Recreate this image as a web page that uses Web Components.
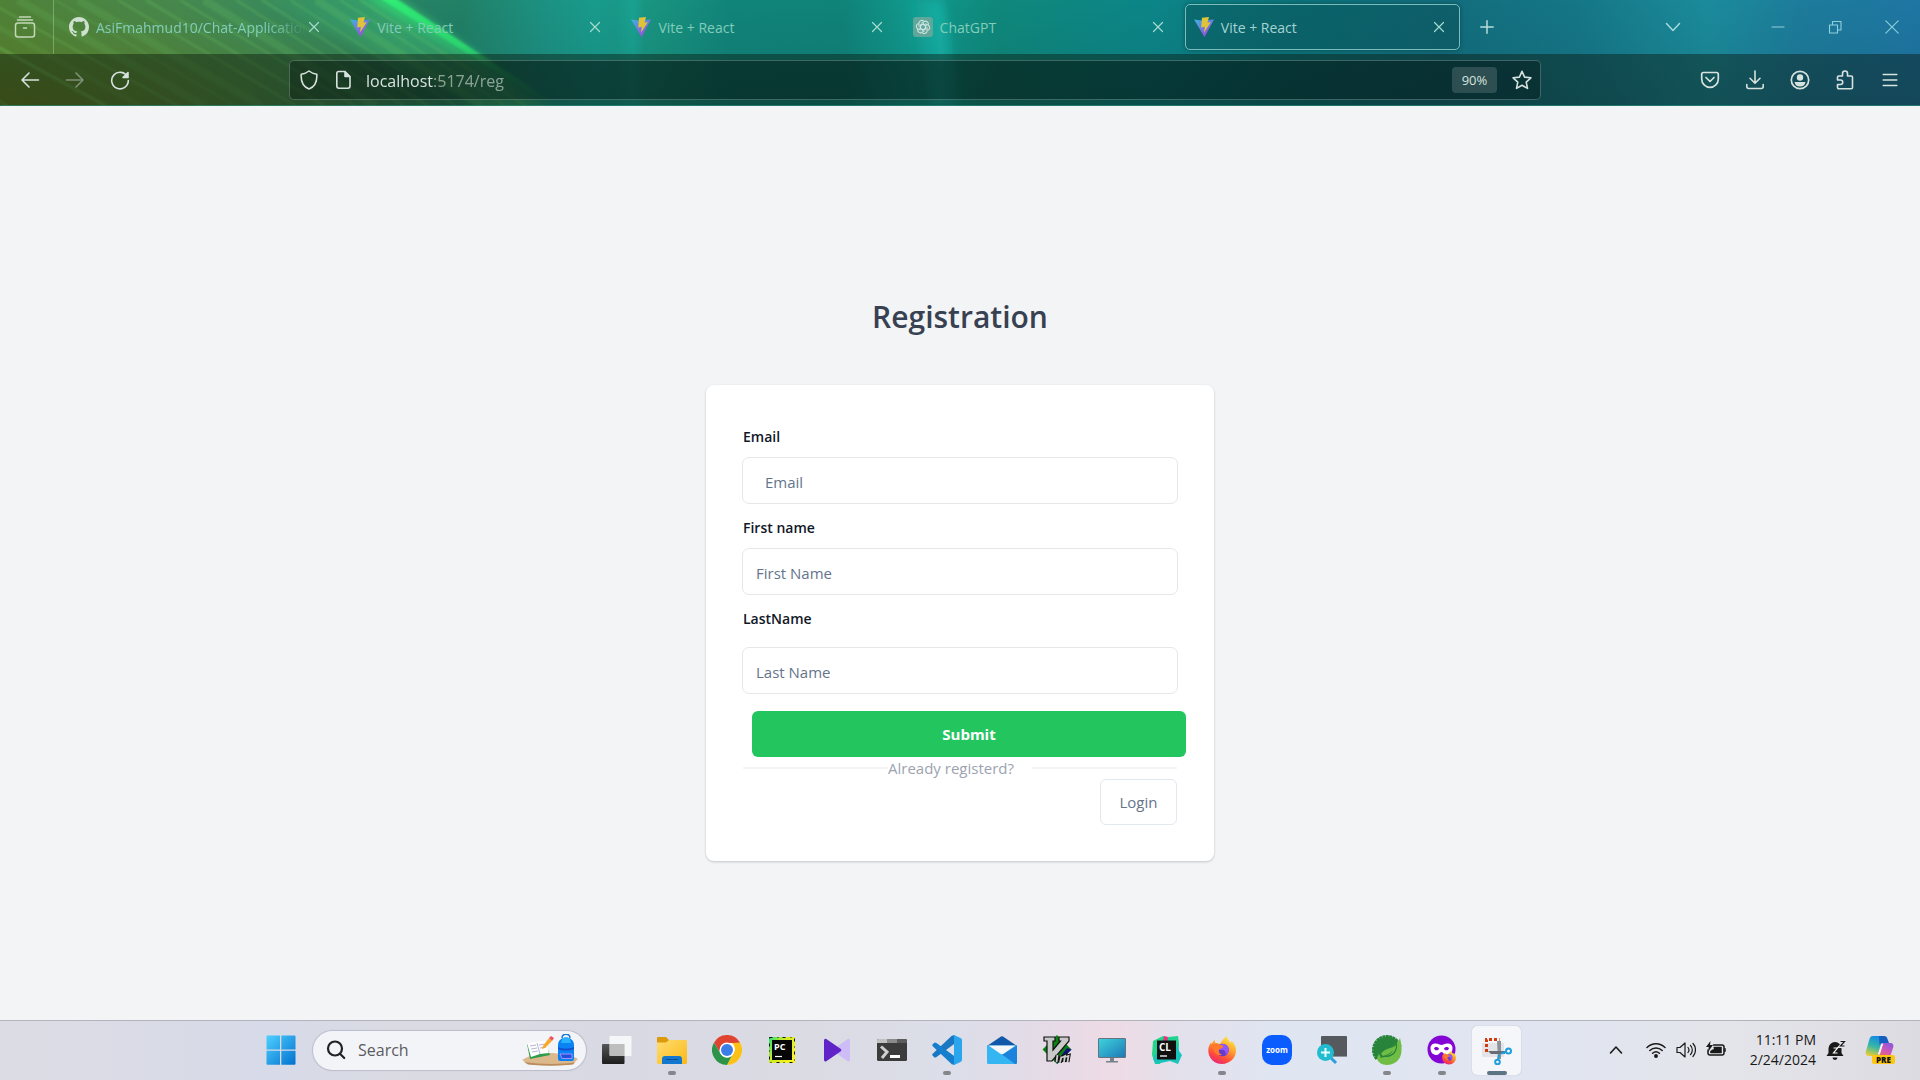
<!DOCTYPE html>
<html lang="en">
<head>
<meta charset="utf-8">
<title>Vite + React</title>
<style>
  html, body { margin: 0; height: 100%; }
  body {
    display: flex; flex-direction: column; min-height: 100vh; overflow: hidden;
    font-family: "Open Sans", "Noto Sans", sans-serif; font-size: 14px; background: #f3f4f6;
  }
</style>
</head>
<body>
<browser-chrome>
  <tab-strip slot="tabs">
    <browser-tab icon="github" faded>AsiFmahmud10/Chat-Application</browser-tab>
    <browser-tab icon="vite">Vite + React</browser-tab>
    <browser-tab icon="vite">Vite + React</browser-tab>
    <browser-tab icon="openai">ChatGPT</browser-tab>
    <browser-tab icon="vite" active>Vite + React</browser-tab>
  </tab-strip>
  <nav-toolbar slot="toolbar"></nav-toolbar>
</browser-chrome>
<registration-page></registration-page>
<task-bar>
  <task-app icon="taskview" label="Task view"></task-app>
  <task-app icon="folder" label="File Explorer" running></task-app>
  <task-app icon="chrome" label="Chrome"></task-app>
  <task-app icon="pycharm" label="PyCharm"></task-app>
  <task-app icon="player" label="Player"></task-app>
  <task-app icon="terminal" label="Terminal"></task-app>
  <task-app icon="vscode" label="Visual Studio Code" running></task-app>
  <task-app icon="mail" label="Mail"></task-app>
  <task-app icon="vim" label="Vim"></task-app>
  <task-app icon="monitor" label="This PC"></task-app>
  <task-app icon="clion" label="CLion"></task-app>
  <task-app icon="firefox" label="Firefox" running></task-app>
  <task-app icon="zoom" label="Zoom"></task-app>
  <task-app icon="magnify" label="Magnifier"></task-app>
  <task-app icon="spring" label="Spring Tools" running></task-app>
  <task-app icon="private" label="Private browsing" running></task-app>
  <task-app icon="snip" label="Snipping Tool" active></task-app>
</task-bar>

<script>
const line = (size, body, w = 1.6) =>
  `<svg viewBox="0 0 ${size} ${size}" width="${size}" height="${size}" fill="none" stroke="currentColor" stroke-width="${w}" stroke-linecap="round" stroke-linejoin="round">${body}</svg>`;
const pic = (size, body) => `<svg viewBox="0 0 ${size} ${size}" width="${size}" height="${size}">${body}</svg>`;

const knot = [0, 60, 120, 180, 240, 300].map(a =>
  `<path transform="rotate(${a} 10 10)" d="M10 7.2 12.6 8.7V12.6M8.3 6.400 11.2 4.600a2.800 2.800 0 0 1 4.100 3.200"/>`).join('');
const gear = Array.from({ length: 15 }, (_, i) =>
  `<rect x="13.400" y="0" width="3.200" height="5" rx=".6" transform="rotate(${i * 14 - 125} 15 15)"/>`).join('');
const fox = `
  <defs><linearGradient id="fa" x1=".8" y1="0" x2=".3" y2="1"><stop offset="0" stop-color="#fff04a"/><stop offset=".4" stop-color="#ffa42c"/><stop offset=".75" stop-color="#ff4b3a"/><stop offset="1" stop-color="#e8257a"/></linearGradient></defs>
  <path fill="url(#fa)" d="M15 29C7 29 1.300 23 1.300 15.500c0-3.500 1.200-6 2.700-8l.5 2c.8-2.200 2-3.700 3.200-4.500-.1 1.200.2 2.200.8 3 1.500 0 3 .3 4.200 1C15 6 16.500 3.500 19.500 1c.5 3 2.500 4.800 4.600 7 .2-1 .2-1.600 0-2.400 3.400 3 4.900 6.400 4.900 10C29 23 23 29 15 29z"/>
  <circle cx="15.500" cy="15" r="6.300" fill="#6a39c9"/><path fill="#9059ff" d="M12 10c3-2 8-1 9.500 3 .8 3-1 6-3 7 1-4-2-6-6-5z"/>
  <path fill="#ff7b2a" d="M4 10c3-2 6-2 8.500-.5l4 1.500c-.3 2-2.500 2.600-4.200 3.200-1.200 2.400.2 5 3.200 5.400-3 1.800-7.500.4-8.500-4z"/>`;

const ICONS = {
  recent: line(24, '<path d="M6.500 2h11M4.500 5h15"/><rect x="2.500" y="8" width="19" height="14" rx="2.500"/><path d="M10.500 13h3"/>', 1.500),
  github: `<svg viewBox="0 0 16 16" width="20" height="20" fill="#cfe0d0"><path d="M8 0C3.580 0 0 3.580 0 8c0 3.540 2.290 6.530 5.470 7.590.4.070.55-.17.55-.38 0-.19-.01-.82-.01-1.490-2.010.37-2.530-.49-2.690-.94-.09-.23-.48-.94-.82-1.130-.28-.15-.68-.52-.01-.53.63-.01 1.080.58 1.230.82.72 1.210 1.870.87 2.330.66.070-.52.280-.87.510-1.070-1.780-.2-3.640-.89-3.640-3.950 0-.87.310-1.590.82-2.150-.08-.2-.36-1.020.08-2.120 0 0 .67-.21 2.200.82.64-.18 1.320-.27 2-.27s1.360.09 2 .27c1.530-1.040 2.200-.82 2.200-.82.44 1.100.16 1.920.08 2.120.51.56.82 1.270.82 2.150 0 3.070-1.870 3.750-3.650 3.950.290.250.540.730.540 1.480 0 1.070-.01 1.930-.01 2.200 0 .21.150.46.550.38A8.010 8.010 0 0 0 16 8c0-4.420-3.580-8-8-8z"/></svg>`,
  vite: pic(20, `<defs><linearGradient id="va" x1="0" y1="0" x2=".7" y2="1"><stop offset="0" stop-color="#38b5e0"/><stop offset="1" stop-color="#a545dc"/></linearGradient></defs><path fill="url(#va)" d="M0 2.500 8 3.500 20 2.500 10.500 20z"/><path fill="#dfc43a" d="m8 .8 7-.8-1.500 5.500 3.300-.3L10 15.500l.8-5.700-3.600.6z"/>`),
  openai: pic(20, `<rect width="20" height="20" rx="3" fill="#5fa69b"/><g fill="none" stroke="#cfe5e0" stroke-width="1.100">${knot}</g>`),
  close: line(12, '<path d="m1.500 1.500 9 9m0-9-9 9"/>', 1.200),
  plus: line(14, '<path d="M7 .8v12.400M.8 7h12.400"/>', 1.500),
  chevdown: line(16, '<path d="m1.500 4.500 6.500 7 6.500-7"/>', 1.500),
  min: line(14, '<path d="M1 7h12"/>', 1.100),
  restore: line(14, '<path d="M1.500 5h8v8h-8zM4.500 5V1.500h8.500V10H9.500"/>', 1.100),
  winclose: line(14, '<path d="m.8.8 12.400 12.400m0-12.400L.8 13.200"/>', 1.100),
  back: line(20, '<path d="M18.500 10H2m7-7L2 10l7 7"/>', 1.600),
  forward: line(20, '<path d="M1.500 10H18m-7-7 7 7-7 7"/>', 1.600),
  reload: line(20, '<path d="M17.500 7A8.300 8.300 0 1 0 18.300 10.500"/><path fill="currentColor" d="M18 2.500v5h-5z"/>', 1.600),
  shield: line(20, '<path d="M10 1c2.200 1.800 5 2.800 7.800 3.200C18.300 12 15.500 17 10 19 4.500 17 1.700 12 2.200 4.200 5 3.800 7.800 2.800 10 1z"/>', 1.600),
  page: line(20, '<path d="M5 1.500h6l5 5V16a2.200 2.200 0 0 1-2.200 2.200H5A2.200 2.200 0 0 1 2.800 16V3.500a2 2 0 0 1 2-2z"/><path fill="currentColor" d="M11 2v4.500h4.500z"/>', 1.600),
  star: line(20, '<path d="m10 1.300 2.600 5.800 6.300.7-4.700 4.300 1.300 6.300-5.500-3.200-5.500 3.200 1.300-6.300L1.100 7.800l6.300-.7z"/>', 1.600),
  pocket: line(20, '<path d="M3.500 2.500h13a1.800 1.800 0 0 1 1.800 1.800V9a8.300 8.300 0 0 1-16.600 0V4.300a1.800 1.800 0 0 1 1.800-1.800zM6 7.500l4 4 4-4"/>', 1.700),
  download: line(20, '<path d="M10 1v12M5 8.300l5 5 5-5M1.800 14.500v2a2 2 0 0 0 2 2h12.400a2 2 0 0 0 2-2v-2"/>', 1.600),
  account: line(20, '<circle cx="10" cy="10" r="8.700"/><g fill="currentColor" stroke="none"><circle cx="10" cy="7.500" r="3.200"/><path d="M4.500 12h11c-.5 3-2.500 4.500-5.500 4.500S5 15 4.500 12z"/></g>', 1.700),
  puzzle: line(20, '<path d="M7.500 6V3.500a2.500 2.500 0 0 1 5 0V6h3.700a1.300 1.300 0 0 1 1.300 1.300V17.500a1.300 1.300 0 0 1-1.300 1.300H3.800a1.300 1.300 0 0 1-1.300-1.300V14.500h3a2 2 0 0 0 0-4.500h-3V7.300A1.300 1.300 0 0 1 3.800 6z"/>', 1.600),
  menu: line(16, '<path d="M1.200 2.500h13.600M1.200 8h13.600M1.200 13.500h13.600"/>', 1.500),

  start: pic(30, `<defs><linearGradient id="sa" x1="0" y1="0" x2="1" y2="1"><stop offset="0" stop-color="#4fd0ff"/><stop offset="1" stop-color="#0271cf"/></linearGradient></defs><path fill="url(#sa)" d="M1.500.5H14v14H.5v-13a1 1 0 0 1 1-1zM15.300.5h13.200a1 1 0 0 1 1 1v13H15.300zM.5 15.800H14v14H1.500a1 1 0 0 1-1-1zM15.300 15.800h14.200v13a1 1 0 0 1-1 1H15.300z"/>`),
  search: line(20, '<circle cx="9" cy="8.500" r="7"/><path d="m14.200 14 4 4"/>', 2.200),
  doodle: `<svg viewBox="0 0 58 32" width="58" height="32">
    <path fill="#dcb98c" d="M1 26c8-5 18-7 27-7s22 2 29 6l-5 5c-14 2-32 2-45 0z"/><path fill="#b98d5d" d="m3 28 4 2.500c14 1.500 32 1.500 45 0l2-2c-14 2-35 2-51-.5z"/>
    <path fill="#2e9c4b" d="m6 10 3 15 20-4-2-5z"/><path fill="#fff" d="m6 9 10-1 8-1 4 12-9 1-9 3z"/><path stroke="#b9b3d0" fill="none" d="m9 12 6-1m-5 4 6-1m-5 4 6-1m1-6 6-1m-5 4 6-1M16 9l3 11"/>
    <path fill="#f7a928" d="m22 12 6-8 3 3-7 7-3 1z"/><path fill="#ee5161" d="m28 4 2-2 3 2-2 3z"/>
    <path fill="none" stroke="#1877d4" stroke-width="1.500" d="M41 4c0-5 8-5 8 0"/><path fill="#0b82f4" d="M37 11c0-10 16-10 16 0v14a2 2 0 0 1-2 2H39a2 2 0 0 1-2-2z"/><path fill="#28b2ff" d="M41 5c2-2 6-2 8 0l1 4H40z"/><path fill="#1250d0" d="M37 13c5 2 11 2 16 0v2c-5 2-11 2-16 0z"/><path fill="#244fdd" stroke="#c79bff" stroke-width=".8" d="M39 20h12v4.500H41z"/></svg>`,
  taskview: pic(30, `<defs><linearGradient id="ta" x1="0" y1="0" x2="0" y2="1"><stop offset="0" stop-color="#555"/><stop offset="1" stop-color="#1d1d1d"/></linearGradient></defs><rect y="9" width="22.500" height="20" rx="1" fill="url(#ta)"/><rect x="7.500" y="1" width="22" height="20" rx="1" fill="#fafafa" opacity=".85"/><path fill="#b5b5b5" opacity=".8" d="M7.500 9h15v12H8.500a1 1 0 0 1-1-1z"/>`),
  folder: pic(30, `<defs><linearGradient id="fo" x1="0" y1="0" x2="1" y2="1"><stop offset="0" stop-color="#ffdd70"/><stop offset="1" stop-color="#fbb917"/></linearGradient></defs><path fill="#dd9a0a" d="M0 3.500A1.300 1.300 0 0 1 1.300 2H9l3.500 3.500-4 3H0z"/><path fill="url(#fo)" d="M0 7.500h9L12 5h16.700A1.300 1.300 0 0 1 30 6.300V27.700a1.300 1.300 0 0 1-1.300 1.300H1.300A1.300 1.300 0 0 1 0 27.700z"/><path fill="#1277cf" d="M5 24a3 3 0 0 1 3-3h14a3 3 0 0 1 3 3v5H5z"/><path stroke="#0a4d93" d="M9 24.500h12"/>`),
  chrome: pic(30, `<circle cx="15" cy="15" r="15" fill="#fff"/><path fill="#df4433" d="M2 7.500A15 15 0 0 1 28 7.500L28 8H15a7 7 0 0 0-6.500 4.500L7.500 17z"/><path fill="#fbc116" d="M28 7.500A15 15 0 0 1 15 30l6.200-11.500A7.300 7.300 0 0 0 20 8z"/><path fill="#2b9448" d="M2 7.500 8.500 18.600A7.400 7.400 0 0 0 18 22l2-1.500L15 30A15 15 0 0 1 2 7.500z"/><circle cx="15" cy="15" r="7.500" fill="#fff"/><circle cx="15" cy="15" r="6" fill="#3c7ee8"/>`),
  pycharm: pic(30, `<defs><linearGradient id="py" x1="0" y1="0" x2="1" y2=".6"><stop offset="0" stop-color="#1fe07c"/><stop offset=".45" stop-color="#cdea24"/><stop offset="1" stop-color="#f5f322"/></linearGradient></defs><rect x="2" y="2" width="26" height="26" fill="url(#py)"/><rect x="2.500" y="2.500" width="25" height="25" fill="none" stroke="#151515" stroke-dasharray="3 5 1 4"/><rect x="5" y="5" width="20" height="20" fill="#060606"/><text x="7" y="15" font-family="Open Sans" font-size="9" font-weight="700" fill="#fff">PC</text><path stroke="#fff" stroke-width="1.200" d="M8 21.500h7"/>`),
  player: pic(30, `<path fill="#cdbcf5" d="M28 5v20a1.500 1.500 0 0 1-2.300 1.200L12 16.500a1.600 1.600 0 0 1 0-2.800L25.700 4A1.500 1.500 0 0 1 28 5z"/><path fill="#6023c8" d="M2 5v20a1.500 1.500 0 0 0 2.300 1.200L18.500 16.500a1.600 1.600 0 0 0 0-2.800L4.300 4A1.500 1.500 0 0 0 2 5z"/>`),
  terminal: pic(30, `<rect y="4" width="30" height="22" rx="1.500" fill="#3c3c3c"/><path fill="#c2c2c2" d="M1.500 4H10v4H0V5.500A1.500 1.500 0 0 1 1.500 4z"/><path fill="#8b8b8b" d="M10 4h10v4H10z"/><path fill="#5c5c5c" d="M20 4h8.500A1.500 1.500 0 0 1 30 5.500V8H20z"/><path fill="none" stroke="#cfcfcf" stroke-width="3" d="m4 11.500 6 5.500-5 6"/><path stroke="#fff" stroke-width="3" d="M13 21.500h10"/>`),
  vscode: pic(30, `<path fill="#1a78c2" d="M1 18.500 19.500 1l3-1 1 8L4.500 22a2 2 0 0 1-2.500 0l-1.200-1.200a1.500 1.500 0 0 1 .2-2.300z"/><path fill="#157fce" d="M1 11.500 19.500 29l3 1 1-8L4.500 8A2 2 0 0 0 2 8L.8 9.200A1.500 1.500 0 0 0 1 11.500z"/><path fill="#2aa5ee" d="M22 0 28.500 3A2.500 2.500 0 0 1 30 5.200V24.800A2.500 2.500 0 0 1 28.500 27L22 30c-1 .3-2 0-2.500-.7 1 .8 2.500.3 2.500-1.300V2c0-1.600-1.500-2.100-2.500-1.300C20 0 21-.3 22 0z"/>`),
  mail: pic(30, `<path fill="#1158a8" d="M0 11 14 1.500a2 2 0 0 1 2 0L30 11v5H0z"/><path fill="#35b5f1" d="M0 10.500h30v17a1.500 1.500 0 0 1-1.500 1.500h-27A1.500 1.500 0 0 1 0 27.500z"/><path fill="#1c82dc" d="m30 10.500-15 9 13 9.500h.5a1.500 1.500 0 0 0 1.500-1.500z"/><path fill="#f4f6f8" d="M1.500 10.500h27L17 18.500a3.500 3.500 0 0 1-4 0z"/>`),
  vim: pic(30, `<path fill="#0a8212" d="m15 0 14.500 14.500L15 29 .5 14.500z"/><path fill="#10107a" d="m25 13 4.500 1.500L15 29v-3z"/><path fill="#c9c9c9" stroke="#111" stroke-width="1.200" d="M2 2h11v4h-2v9l7.500-9H17V2h10v4L10 26H5V6H2z"/><path fill="none" stroke="#111" stroke-width="4" d="m15.500 20-1 7m5-5.500-1.500 6m2-5 3-1.500-1 6m1-5 3.500-1-1 6"/><path fill="none" stroke="#ccc" stroke-width="1.800" d="m15.500 20-1 7m5-5.500-1.500 6m2-5 3-1.500-1 6m1-5 3.500-1-1 6"/>`),
  monitor: pic(30, `<defs><linearGradient id="mo" x1="0" y1="0" x2="1" y2="1"><stop offset="0" stop-color="#3fd4dd"/><stop offset="1" stop-color="#1c77b7"/></linearGradient></defs><rect x="1.500" y="3.500" width="27" height="19" rx=".5" fill="url(#mo)" stroke="#66727c"/><path fill="#76828c" d="M13 23h4v3h4v1.500H9V26h4z"/>`),
  clion: pic(30, `<path fill="#22d68c" d="m1 6 10-5 8 3L8 29H3L0 20z"/><path fill="#19c5bb" d="M12 4 26 2l1 14 3 4-4 9-8-3-14 3-3-5z"/><path fill="#e5347d" d="m12 1 4 1-1 6-4-2z"/><path fill="#20d391" d="m16 2 10-1 1 10-10 1z"/><rect x="5" y="5.500" width="19" height="19" fill="#101010"/><text x="7" y="15.500" font-family="Open Sans" font-size="10" font-weight="700" fill="#fff">CL</text><path stroke="#fff" stroke-width="1.300" d="M8 21h7"/>`),
  firefox: pic(30, fox),
  zoom: pic(30, `<rect width="30" height="30" rx="10" fill="#0b5cff"/><text x="15" y="17.500" text-anchor="middle" font-family="Open Sans" font-size="8" font-weight="700" fill="#fff">zoom</text>`),
  magnify: pic(30, `<rect x="4" y="1" width="26" height="21" rx="1" fill="#56595e"/><path fill="#8f959b" d="M4 21h26v1H4z"/><path stroke="#2f9fdf" stroke-width="3" d="m13 22 6 6"/><circle cx="8.500" cy="17.500" r="8.500" fill="#21bcd0"/><path stroke="#e9ffff" stroke-width="2" d="M8.500 13v9M4 17.500h9"/>`),
  spring: pic(30, `<g fill="#27843a">${gear}</g><circle cx="15" cy="15" r="13" fill="#27843a"/><path fill="#6fbd44" d="M28 3c3 12 3 26-13 27-5 0-9-3-10-6 3-14 18-9 23-21z"/><path fill="#27843a" d="M7 19c2-8 14-6 18-12 1 8-2 15-11 15-2 0-4 0-5 1z"/><path fill="#6fbd44" d="M9 19c3-6 11-5 15-9 0 7-4 10-10 11 3-1 6-3 7-6-3 4-7 5-10 6z"/>`),
  private: pic(30, `<circle cx="14.500" cy="14.500" r="14" fill="#8306d5"/><path fill="#fff" d="M3.500 13c0-5 6-5.500 9-3.500 1 .6 3 .6 4 0 3-2 9-1.500 9 3.500s-3 7-6 7-3-3-5-3-2 3-5 3-6-2-6-7z"/><path fill="#8306d5" d="M7 13.500c1-2 4-2 5 .3-1 2-4 2.200-5-.3zM22 13.500c-1-2-4-2-5 .3 1 2 4 2.200 5-.3z"/><svg x="14.500" y="15" width="15" height="15" viewBox="0 0 30 30">${fox}</svg>`),
  snip: pic(30, `<path fill="#e4e4e8" d="M0 8h22v14H0z"/><path fill="none" stroke="#d43b0c" stroke-width="3" stroke-dasharray="3 2" d="M4.500 17V4.500h13"/><path fill="#8a929a" d="M15 6h4v18h-3z"/><path fill="#666d74" d="M6 16h17v3H9z"/><g fill="none" stroke="#1f9ede" stroke-width="2"><circle cx="26.500" cy="16" r="2.500"/><circle cx="15.500" cy="27" r="2.300"/><path d="m24 17-5 1.500M16 24.500l1-5"/></g>`),
  up: line(14, '<path d="m1.500 10 5.500-6 5.500 6"/>', 1.600),
  wifi: line(20, '<path d="M1 7.500c5-5 13-5 18 0M3.800 10.500c3.500-3.400 8.900-3.400 12.400 0M6.600 13.300c2-1.800 4.800-1.800 6.800 0"/><circle cx="10" cy="16" r="1.200" fill="currentColor"/>', 1.500),
  volume: line(20, '<path d="M1 7.500h3l5-4.500v14l-5-4.500H1zM12 7.500c1.200 1.500 1.200 3.500 0 5M14.500 5.300c2.400 2.700 2.400 6.700 0 9.400M17 3.500c3.300 3.500 3.300 9.500 0 13"/>', 1.200),
  battery: line(20, '<path d="M7.500 5H16a2 2 0 0 1 2 2v6a2 2 0 0 1-2 2H4a2 2 0 0 1-2-2v-3"/><path fill="currentColor" stroke-width=".5" d="M8 7h7.500v6h-11v-2L8 9zM18.500 8.500h1v3h-1z"/><path fill="currentColor" stroke="none" d="M4.500 1 0 7h2.800L2 12l5-7H4z"/>', 1.500),
  bell: pic(20, `<path fill="#191919" d="M9 2a6.500 6.500 0 0 1 6.500 6.500V13l2 3H.5l2-3V8.500A6.500 6.500 0 0 1 9 2zM6.500 17.500h5a2.500 2.500 0 0 1-5 0z"/><path fill="none" stroke="#e3e4ea" stroke-width="3" d="M14 1.500h4.500L14 6.500h4.500"/><path fill="none" stroke="#191919" stroke-width="1.200" d="M14.500 1.500h4L14.500 6h4"/><path fill="none" stroke="#fff" stroke-width="1.200" d="M7.500 8h4l-4 5h4"/>`),
  copilot: `<svg viewBox="0 0 30 30" width="30" height="30"><defs><linearGradient id="ca" x1=".5" y1="0" x2=".2" y2="1"><stop offset="0" stop-color="#118de2"/><stop offset=".5" stop-color="#38b7a5"/><stop offset="1" stop-color="#f1cf2f"/></linearGradient><linearGradient id="cb" x1=".8" y1="0" x2=".3" y2="1"><stop offset="0" stop-color="#8c58dd"/><stop offset=".5" stop-color="#d458b4"/><stop offset="1" stop-color="#f3733b"/></linearGradient></defs><path fill="url(#ca)" d="M8 1h11l-5 17c-.6 2-2 3-4 3H4c-3 0-4-2.500-3-5L4.500 4C5 2 6 1 8 1z"/><path fill="#155fc0" d="M14 1h5c2 0 3 1 3.500 3L24 8h-6c-2 0-3 1-3.500 2.500z"/><path fill="url(#cb)" d="M19 8h6c3 0 4 2 3 5l-3 9c-.8 2-2 3-4 3h-9l3-13c.6-2.500 2-4 4-4z"/><path fill="none" stroke="#f3f3f6" stroke-width="2" d="M17.500 9c-2 2-2 8-4 10.500"/><rect x="7" y="20" width="23" height="9" rx="2" fill="#fcc613"/><text x="18.500" y="27.500" text-anchor="middle" font-family="Open Sans" font-size="8" font-weight="800" fill="#111">PRE</text></svg>`
};

/* Base class: stamps the subclass template into an open shadow root. */
class Part extends HTMLElement {
  constructor() {
    super();
    const t = document.createElement('template');
    t.innerHTML = `<style>
      :host { box-sizing: border-box; } :host([hidden]) { display: none; }
      *, ::before, ::after { box-sizing: border-box; }
      button, input { font: inherit; color: inherit; margin: 0; padding: 0; border: 0; background: none; outline: 0; }
      button { display: inline-flex; align-items: center; justify-content: center; }
      svg { display: block; flex: none; }
    </style>` + this.render();
    this.attachShadow({ mode: 'open' }).append(t.content.cloneNode(true));
  }
}
const iconButton = (name, label, cls = '') => `<button class="${cls}" aria-label="${label}">${ICONS[name]}</button>`;

customElements.define('browser-chrome', class extends Part {
  render() {
    /* Aurora streaks: [x at the top, x at the bottom, opacity, width]. */
    const rays = [[-190, 8, .3, 3], [-88, 106, .34, 3], [-50, 140, .1, 6], [-15, 178, .24, 2], [18, 205, .12, 8], [55, 235, .16, 2],
      [78, 262, .12, 8], [118, 296, .26, 2], [146, 325, .2, 3], [180, 355, .26, 2], [204, 376, .16, 8], [236, 404, .26, 2],
      [262, 428, .18, 3], [290, 456, .22, 2], [316, 482, .16, 8], [340, 506, .24, 2], [360, 526, .2, 3]]
      .map(([a, b, o, w]) => `<path d="M${a} 0 L${b} 106" stroke="#7fdc68" stroke-opacity="${o}" stroke-width="${w}"/>`).join('');
    return `<style>
      :host { display: grid; flex: none; }
      .sky, .rows { grid-area: 1 / 1; }
      .sky { width: 100%; height: 0; min-height: 100%; }
      .rows { z-index: 1; }
    </style>
    <svg class="sky" viewBox="0 0 1920 106" preserveAspectRatio="none" aria-hidden="true">
      <defs>
        <linearGradient id="base">
          <stop offset="0" stop-color="#4f8138"/><stop offset=".08" stop-color="#48874a"/><stop offset=".13" stop-color="#3d8a58"/>
          <stop offset=".2" stop-color="#2b8462"/><stop offset=".24" stop-color="#218066"/><stop offset=".28" stop-color="#1d9080"/><stop offset=".31" stop-color="#189b8c"/>
          <stop offset=".34" stop-color="#199480"/><stop offset=".38" stop-color="#118479"/><stop offset=".44" stop-color="#108379"/>
          <stop offset=".475" stop-color="#109a8e"/><stop offset=".52" stop-color="#0f887b"/><stop offset=".6" stop-color="#0c8588"/>
          <stop offset=".67" stop-color="#0c757b"/><stop offset=".75" stop-color="#126d7c"/><stop offset=".82" stop-color="#157686"/>
          <stop offset=".89" stop-color="#1b8b9b"/><stop offset=".94" stop-color="#1d7b9b"/><stop offset="1" stop-color="#1e76a3"/>
        </linearGradient>
        <linearGradient id="dim" x2="0" y2="1"><stop offset="0" stop-color="#0a2f3a" stop-opacity="0"/><stop offset="1" stop-color="#0a2f3a" stop-opacity=".14"/></linearGradient>
        <radialGradient id="olive" cx="0" cy="1" r="1"><stop offset="0" stop-color="#6f7c14" stop-opacity=".75"/><stop offset="1" stop-color="#5e8a24" stop-opacity="0"/></radialGradient>
        <linearGradient id="glow"><stop offset="0" stop-color="#3fb470" stop-opacity="0"/><stop offset=".5" stop-color="#3fb874" stop-opacity=".6"/><stop offset="1" stop-color="#3fb874" stop-opacity=".5"/></linearGradient>
        <linearGradient id="fade" x2="0" y2="1"><stop offset="0" stop-color="#30ec74"/><stop offset=".45" stop-color="#2dde72"/><stop offset=".65" stop-color="#2ccf72" stop-opacity=".5"/><stop offset="1" stop-color="#2ccf72" stop-opacity="0"/></linearGradient>
        <linearGradient id="ray"><stop offset="0" stop-color="#1cc5bb" stop-opacity="0"/><stop offset=".6" stop-color="#1cc5bb" stop-opacity=".6"/><stop offset="1" stop-color="#1cc5bb" stop-opacity="0"/></linearGradient>
        <filter id="soft" x="-10%" y="-20%" width="120%" height="140%"><feGaussianBlur stdDeviation="1.200"/></filter>
        <filter id="haze" x="-30%" y="-50%" width="160%" height="200%"><feGaussianBlur stdDeviation="5"/></filter>
      </defs>
      <rect width="1920" height="106" fill="url(#base)"/>
      <path d="M240 -10h148l170 126h-60z" fill="url(#glow)" filter="url(#haze)"/>
      <rect width="560" height="106" fill="url(#olive)"/>
      <g filter="url(#soft)">${rays}</g>
      <path d="M362 -4h26l168 112h-6z" fill="url(#fade)" opacity=".6" filter="url(#haze)"/>
      <path d="M376 -4h16l170 112h-8z" fill="url(#fade)" filter="url(#soft)"/>
      <path d="M908 0h34l22 106h-34z" fill="url(#ray)" filter="url(#haze)"/>
      <path d="M615 0h30v106h-30z" fill="url(#ray)" opacity=".4"/>
      <rect width="1920" height="106" fill="url(#dim)"/>
    </svg>
    <div class="rows"><slot name="tabs"></slot><slot name="toolbar"></slot></div>`;
  }
});

customElements.define('tab-strip', class extends Part {
  render() {
    return `<style>
      :host { display: flex; height: 54px; align-items: center; color: #a8dccb; }
      .recent { width: 54px; height: 54px; padding-right: 4px; border-right: 1px solid rgba(190,240,200,.35); color: #c3d8b8; }
      .tabs { display: flex; gap: 6px; margin-left: 6px; flex: 0 1 1400px; min-width: 0; }
      .new { width: 54px; height: 44px; color: #b6dedd; }
      .all { margin-left: auto; width: 44px; height: 44px; color: #a5dade; }
      .win { display: flex; margin-left: 54px; color: #8fd0da; }
      .win button { width: 57px; height: 54px; }
    </style>
    ${iconButton('recent', 'Recent browsing', 'recent')}
    <div class="tabs" role="tablist"><slot></slot></div>
    ${iconButton('plus', 'New tab', 'new')}
    ${iconButton('chevdown', 'List all tabs', 'all')}
    <div class="win">${iconButton('min', 'Minimize')}${iconButton('restore', 'Restore')}${iconButton('winclose', 'Close')}</div>`;
  }
});

customElements.define('browser-tab', class extends Part {
  render() {
    return `<style>
      :host { display: flex; flex: 1 1 0; min-width: 0; height: 46px; align-items: center; padding: 0 14px 0 8px; border: 1px solid transparent; border-radius: 5px; color: #82cdb9; }
      :host([active]) { border-color: #79bdbd; background: rgba(8,75,80,.4); color: #a5d3d4; box-shadow: 0 0 4px rgba(0,40,45,.5); }
      .title { flex: 1; min-width: 0; justify-content: flex-start; gap: 7px; height: 44px; line-height: 20px; white-space: nowrap; overflow: hidden; }
      .title span { padding-top: 2px; }
      :host([faded]) .title { -webkit-mask-image: linear-gradient(to right, #000 200px, transparent 238px); mask-image: linear-gradient(to right, #000 200px, transparent 238px); }
      .x { width: 12px; height: 20px; color: #a6dccf; }
    </style>
    <button class="title" role="tab">${ICONS[this.getAttribute('icon')]}<span><slot></slot></span></button>
    ${iconButton('close', 'Close tab', 'x')}`;
  }
});

customElements.define('nav-toolbar', class extends Part {
  render() {
    return `<style>
      :host { display: flex; height: 52px; align-items: center; background: rgba(10,20,10,.42); border-bottom: 1px solid rgba(40,150,130,.6); color: #d6e2de; }
      .left { flex: 0 0 289px; display: flex; padding-left: 7px; }
      .left button { width: 45px; height: 40px; }
      .left .off { opacity: .45; }
      .url { flex: 1; height: 40px; display: flex; align-items: center; border: 1px solid rgba(160,200,190,.35); border-radius: 5px; background: rgba(0,10,10,.32); padding: 0 8px; }
      .url button { width: 20px; height: 30px; }
      .url .shield { margin: 0 15px 0 1px; }
      input { flex: 1; min-width: 0; height: 38px; padding-top: 3px; margin-left: 12px; font-size: 16px; color: #d8e3df; -webkit-mask-image: linear-gradient(to right, #000 67px, rgba(0,0,0,.6) 67px); mask-image: linear-gradient(to right, #000 67px, rgba(0,0,0,.6) 67px); }
      .url .zoom { width: 45px; height: 26px; border-radius: 4px; background: rgba(255,255,255,.15); font-size: 13px; margin-right: 15px; }
      .right { flex: 0 0 379px; display: flex; justify-content: flex-end; padding-right: 8px; }
      .right button { width: 45px; height: 40px; }
    </style>
    <div class="left">${iconButton('back', 'Back')}${iconButton('forward', 'Forward', 'off')}${iconButton('reload', 'Reload')}</div>
    <div class="url">
      ${iconButton('shield', 'Tracking protection', 'shield')}${iconButton('page', 'Site information')}
      <input aria-label="Address" value="localhost:5174/reg" spellcheck="false">
      <button class="zoom">90%</button>${iconButton('star', 'Bookmark this page')}
    </div>
    <div class="right">${iconButton('pocket', 'Pocket')}${iconButton('download', 'Downloads')}${iconButton('account', 'Account')}${iconButton('puzzle', 'Extensions')}${iconButton('menu', 'Menu')}</div>`;
  }
});

customElements.define('text-field', class extends Part {
  render() {
    const label = this.getAttribute('label');
    return `<style>
      :host { display: flex; flex-direction: column; gap: var(--field-gap, 8px); }
      label { padding-left: 1px; line-height: 24px; font-size: 14px; font-weight: 600; color: #111827; }
      input { width: 100%; height: 47px; border: 1px solid #e5e7eb; border-radius: 7px; padding: 2px var(--field-inset, 13px) 0; background: #fff; color: #111827; }
      input::placeholder { color: #64748b; opacity: 1; }
    </style>
    <label for="field">${label}</label>
    <input id="field" type="${this.getAttribute('type') || 'text'}" placeholder="${this.getAttribute('placeholder')}">`;
  }
});

customElements.define('registration-page', class extends Part {
  render() {
    return `<style>
      :host { display: flex; flex: 1; flex-direction: column; align-items: center; justify-content: center; padding-top: 28px; background: #f3f4f6; font-size: 15px; }
      h1 { margin: 0 0 44px; line-height: 48px; font-size: 30px; font-weight: 600; color: #374151; }
      form { width: 508px; max-width: 100%; padding: 40px 36px 36px; border-radius: 8px; background: #fff; box-shadow: 0 1px 3px rgba(0,0,0,.12), 0 1px 2px rgba(0,0,0,.08); }
      .fields { display: flex; flex-direction: column; gap: 12px; }
      .email { --field-inset: 22px; }
      .last { --field-gap: 16px; }
      .submit { width: 434px; height: 46px; margin: 17px 0 0 10px; border-radius: 6px; background: #22c55e; color: #fff; font-weight: 700; }
      .or { display: flex; align-items: center; height: 22px; padding: 0 1px; color: #9ca3af; line-height: 22px; }
      .or::before, .or::after { content: ""; flex: 1; height: 2px; background: #f3f4f6; }
      .or span { padding-right: 18px; }
      .end { display: flex; justify-content: flex-end; padding-right: 1px; }
      .login { width: 77px; height: 46px; border: 1px solid #e2e8f0; border-radius: 6px; color: #64748b; }
    </style>
    <h1>Registration</h1>
    <form>
      <div class="fields">
        <text-field class="email" label="Email" type="email" placeholder="Email"></text-field>
        <text-field label="First name" placeholder="First Name"></text-field>
        <text-field class="last" label="LastName" placeholder="Last Name"></text-field>
      </div>
      <button class="submit" type="submit">Submit</button>
      <div class="or"><span>Already registerd?</span></div>
      <div class="end"><button class="login" type="button">Login</button></div>
    </form>`;
  }
});

customElements.define('task-app', class extends Part {
  render() {
    return `<style>
      :host { display: block; }
      button { position: relative; width: 49px; height: 49px; border-radius: 5px; }
      :host([active]) button { background: rgba(255,255,255,.65); box-shadow: 0 0 1px rgba(0,0,0,.3); }
      :host([running]) button::after, :host([active]) button::after { content: ""; position: absolute; bottom: 0; width: 8px; height: 4px; border-radius: 2px; background: #85868c; }
      :host([active]) button::after { width: 20px; background: #5c7583; }
    </style>
    <button aria-label="${this.getAttribute('label')}">${ICONS[this.getAttribute('icon')]}</button>`;
  }
});

customElements.define('task-bar', class extends Part {
  render() {
    return `<style>
      :host { display: flex; flex: none; height: 60px; align-items: center; padding-bottom: 1px; border-top: 1px solid #b2b3bd; color: #191919;
        background: linear-gradient(to right, #dcdce4 0, #d7dae8 14%, #dadbe2 22%, #d8d9e3 32%, #dadbe3 42%, #dcdee9 50%, #e6dbe7 55%, #eedbe5 58%, #e4e0eb 61%, #dfe5f1 66%, #e0e5f1 80%, #e4e5ea 90%, #dcdbe1 100%); }
      .start { width: 49px; height: 49px; margin-left: 256px; }
      .search { display: flex; align-items: center; width: 273px; height: 39px; margin: 0 6px 0 8px; padding: 0 7px 0 13px; border-radius: 20px; background: #f3f4f8; box-shadow: 0 0 1px 1px rgba(120,120,150,.3); color: #222; }
      input { flex: 1; min-width: 0; height: 36px; margin-left: 12px; font-size: 16px; }
      input::placeholder { color: #5b5b5f; opacity: 1; }
      .apps { display: flex; gap: 6px; }
      .tray { margin-left: auto; display: flex; align-items: center; padding-right: 25px; }
      .tray button { width: 30px; height: 40px; }
      .tray .more { margin-right: 10px; }
      .tray .clock { width: auto; flex-direction: column; align-items: flex-end; margin: 0 5px 0 19px; line-height: 20px; }
      .tray .bell { margin-right: 14px; }
    </style>
    ${iconButton('start', 'Start', 'start')}
    <label class="search">${ICONS.search}<input aria-label="Search" placeholder="Search">${ICONS.doodle}</label>
    <div class="apps"><slot></slot></div>
    <div class="tray">
      ${iconButton('up', 'Hidden icons', 'more')}${iconButton('wifi', 'Network')}${iconButton('volume', 'Volume')}${iconButton('battery', 'Battery')}
      <button class="clock"><span>11:11 PM</span><span>2/24/2024</span></button>
      ${iconButton('bell', 'Notifications', 'bell')}${iconButton('copilot', 'Copilot')}
    </div>`;
  }
});
</script>
</body>
</html>
